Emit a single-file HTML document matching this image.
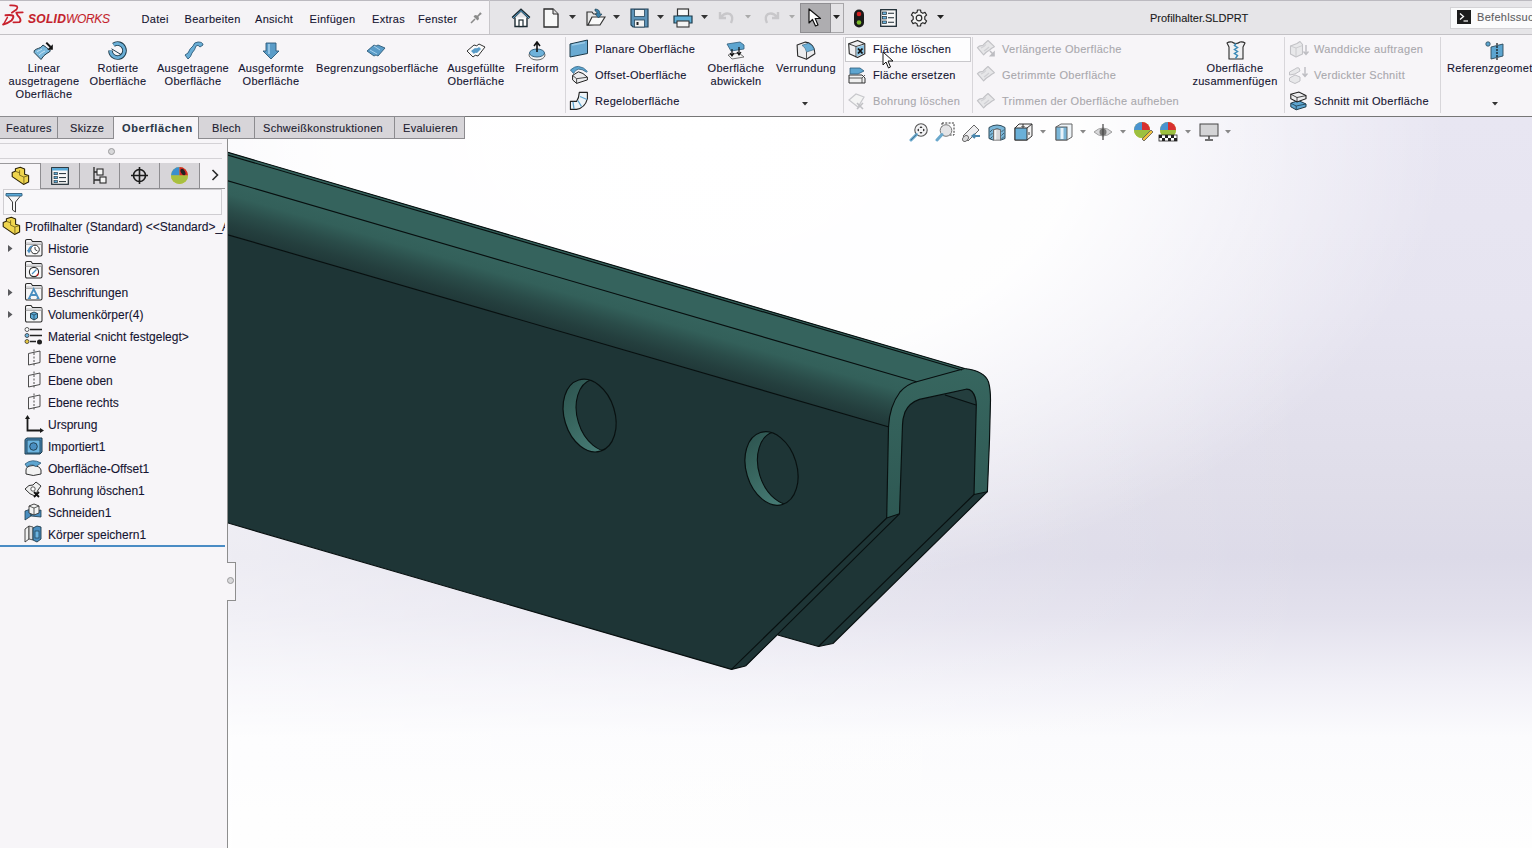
<!DOCTYPE html>
<html><head><meta charset="utf-8">
<style>
*{margin:0;padding:0;box-sizing:border-box}
html,body{width:1532px;height:848px;overflow:hidden;background:#f7f5f8;font-family:"Liberation Sans",sans-serif;color:#141430;font-size:11px;letter-spacing:0.3px;-webkit-text-stroke:0.1px currentColor}
.a{position:absolute}
.t{position:absolute;white-space:nowrap;line-height:13px}
.c{text-align:center}
.g{color:#a9a8ad}
</style></head><body>
<!-- title/menu bar -->
<div class="a" style="left:0;top:0;width:1532px;height:34px;background:#f5f3f6"></div>
<div class="a" style="left:489px;top:0;width:1043px;height:34px;background:#e6e5e8"></div>
<div class="a" style="left:0;top:0;width:1532px;height:1px;background:#bcbac0"></div>
<div class="a" style="left:489px;top:0;width:1px;height:34px;background:#c8c6ca"></div>
<div class="a" style="left:0;top:34px;width:1532px;height:1px;background:#c3c1c5"></div>
<!-- logo -->
<svg class="a" style="left:0;top:0" width="26" height="28" viewBox="0 0 26 28"><g fill="none" stroke="#c8202c" stroke-linecap="round" stroke-linejoin="round"><path d="M10.1 5.4 Q15 5.2 17 6.2 Q18 7.5 16.5 9.5 L11.8 12.7" stroke-width="1.7"/><path d="M5.5 15.3 Q11 14.6 13 15.6 Q14.2 17.5 11.5 20.5 Q8 23.2 3.1 24.5" stroke-width="1.9"/><path d="M7.4 17.3 L4 23.5" stroke-width="1.5"/><path d="M22.7 12.4 L16.3 12.7 Q17 15 19.5 17.5 Q21.5 20.5 19.6 22.2 L13.4 22.3" stroke-width="1.8"/></g></svg>
<div class="t" style="left:28px;top:13px;font-size:12px;color:#c41f2c;font-weight:bold;font-style:italic;line-height:13px">SOLID</div>
<div class="t" style="left:66px;top:13px;font-size:12px;color:#c41f2c;font-style:italic;letter-spacing:-0.35px;line-height:13px">WORKS</div>
<!-- menu -->
<div class="t" style="left:141.5px;top:13px;color:#141430">Datei</div>
<div class="t" style="left:184.5px;top:13px;color:#141430">Bearbeiten</div>
<div class="t" style="left:255px;top:13px;color:#141430">Ansicht</div>
<div class="t" style="left:309.5px;top:13px;color:#141430">Einfügen</div>
<div class="t" style="left:372px;top:13px;color:#141430">Extras</div>
<div class="t" style="left:418px;top:13px;color:#141430">Fenster</div>
<svg class="a" style="left:470px;top:10px" width="14" height="14" viewBox="0 0 14 14"><path d="M1 13 L5 9" stroke="#8a8a8a" stroke-width="1.6"/><path d="M3.5 6.5 L7.5 10.5 L9 9 L8.5 6.5 L11.5 4 L12.5 4.5 L9.5 1.5 L10 2.5 L7.5 5.5 L5 5 Z" fill="#8a8a8a"/></svg>
<!-- quick toolbar -->
<svg class="a" style="left:511px;top:8px" width="20" height="20" viewBox="0 0 20 20"><path d="M1.5 10 L10 2 L18.5 10" fill="none" stroke="#1d2b33" stroke-width="2.6"/><path d="M2 10 L10 2.7 L18 10" fill="none" stroke="#5aaad8" stroke-width="1"/><path d="M4 9.5 V18.5 H16 V9.5" fill="#fff" stroke="#1d2b33" stroke-width="1.4"/><rect x="8" y="12" width="4" height="6.5" fill="#fff" stroke="#1d2b33" stroke-width="1.2"/></svg>
<svg class="a" style="left:543px;top:8px" width="16" height="20" viewBox="0 0 16 20"><path d="M1 1 H10 L15 6 V19 H1 Z" fill="#f8f8f8" stroke="#2a2a2a" stroke-width="1.3"/><path d="M10 1 V6 H15" fill="#ddd" stroke="#2a2a2a" stroke-width="1"/></svg>
<svg class="a" style="left:569px;top:15px" width="7" height="5"><path d="M0 0 H7 L3.5 4 Z" fill="#333"/></svg>
<svg class="a" style="left:586px;top:8px" width="20" height="20" viewBox="0 0 20 20"><path d="M1 4 H6 L7.5 6 H13 V16 L1 17 Z" fill="#e8e8e8" stroke="#333" stroke-width="1.2"/><path d="M2 17 L6 9 H19 L14 17 Z" fill="#fafafa" stroke="#333" stroke-width="1.2"/><path d="M9 1 Q14 1 14 6 L16 6 L12.5 10 L9 6 L11 6 Q11 3 9 3 Z" fill="#3a7fa8" stroke="#1d3a4a" stroke-width="0.6"/></svg>
<svg class="a" style="left:613px;top:15px" width="7" height="5"><path d="M0 0 H7 L3.5 4 Z" fill="#333"/></svg>
<svg class="a" style="left:630px;top:8px" width="19" height="20" viewBox="0 0 19 20"><path d="M1 1 H18 V19 H3 L1 17 Z" fill="#5d93b8" stroke="#25455a" stroke-width="1.2"/><rect x="4.5" y="1.5" width="10" height="7" fill="#f2f2f2" stroke="#25455a" stroke-width="0.8"/><rect x="4.5" y="12" width="10" height="7" fill="#f2f2f2" stroke="#25455a" stroke-width="0.8"/><rect x="6.5" y="14" width="2" height="3" fill="#222"/></svg>
<svg class="a" style="left:657px;top:15px" width="7" height="5"><path d="M0 0 H7 L3.5 4 Z" fill="#333"/></svg>
<svg class="a" style="left:673px;top:8px" width="20" height="20" viewBox="0 0 20 20"><rect x="4.5" y="1" width="11" height="7" fill="#fafafa" stroke="#333" stroke-width="1.2"/><path d="M1 8 H19 V15 H1 Z" fill="#5fb0d8" stroke="#1d3a4a" stroke-width="1.2"/><rect x="4" y="13" width="12" height="6" fill="#f4f4f4" stroke="#333" stroke-width="1.1"/></svg>
<svg class="a" style="left:701px;top:15px" width="7" height="5"><path d="M0 0 H7 L3.5 4 Z" fill="#333"/></svg>
<svg class="a" style="left:718px;top:10px" width="18" height="15" viewBox="0 0 18 15"><path d="M2 2 V8 H8 M3 7 Q7 2 12 4 Q16 7 13 13" fill="none" stroke="#c8c7ca" stroke-width="2.4"/></svg>
<svg class="a" style="left:745px;top:15px" width="6" height="4"><path d="M0 0 H6 L3 3.5 Z" fill="#aaa"/></svg>
<svg class="a" style="left:762px;top:10px" width="18" height="15" viewBox="0 0 18 15"><path d="M16 2 V8 H10 M15 7 Q11 2 6 4 Q2 7 5 13" fill="none" stroke="#c8c7ca" stroke-width="2.4"/></svg>
<svg class="a" style="left:789px;top:15px" width="6" height="4"><path d="M0 0 H6 L3 3.5 Z" fill="#aaa"/></svg>
<div class="a" style="left:800px;top:3px;width:44px;height:30px;background:#e4e3e6;border:1px solid #a8a7aa"></div>
<div class="a" style="left:800px;top:3px;width:31px;height:30px;background:#aeadb0;border:1px solid #8f8e92"></div>
<svg class="a" style="left:808px;top:8px" width="14" height="19" viewBox="0 0 14 19"><path d="M1 1 V15 L4.5 11.5 L7.5 18 L10 17 L7.2 10.5 L12.5 10.5 Z" fill="#fff" stroke="#111" stroke-width="1.2" stroke-linejoin="round"/></svg>
<svg class="a" style="left:833px;top:15px" width="7" height="5"><path d="M0 0 H7 L3.5 4 Z" fill="#222"/></svg>
<svg class="a" style="left:853px;top:9px" width="12" height="19" viewBox="0 0 12 19"><rect x="1" y="0.5" width="10" height="18" rx="5" fill="#1a1a1a"/><circle cx="6" cy="5" r="2.3" fill="#d42020"/><circle cx="6" cy="13.5" r="2.3" fill="#7ab82a"/></svg>
<svg class="a" style="left:880px;top:9px" width="17" height="18" viewBox="0 0 17 18"><rect x="0.7" y="0.7" width="15.6" height="16.6" fill="#f8f8f8" stroke="#1d2b33" stroke-width="1.3"/><rect x="2.5" y="3" width="4" height="2.5" fill="#6cb4e0" stroke="#1d2b33" stroke-width="0.7"/><rect x="2.5" y="7.5" width="4" height="2.5" fill="#6cb4e0" stroke="#1d2b33" stroke-width="0.7"/><rect x="2.5" y="12" width="4" height="2.5" fill="#6cb4e0" stroke="#1d2b33" stroke-width="0.7"/><path d="M8 4.2H14M8 8.7H14M8 13.2H14" stroke="#1d2b33" stroke-width="1.1"/></svg>
<svg class="a" style="left:910px;top:9px" width="18" height="18" viewBox="0 0 18 18"><path d="M7.5 1 H10.5 L11 3.3 L12.8 4.3 L15 3.4 L16.6 6 L14.8 7.6 V10.4 L16.6 12 L15 14.6 L12.8 13.7 L11 14.7 L10.5 17 H7.5 L7 14.7 L5.2 13.7 L3 14.6 L1.4 12 L3.2 10.4 V7.6 L1.4 6 L3 3.4 L5.2 4.3 L7 3.3 Z" fill="#f4f4f4" stroke="#2a2a2a" stroke-width="1.2" stroke-linejoin="round"/><circle cx="9" cy="9" r="2.8" fill="none" stroke="#2a2a2a" stroke-width="1.2"/></svg>
<svg class="a" style="left:937px;top:15px" width="7" height="5"><path d="M0 0 H7 L3.5 4 Z" fill="#222"/></svg>
<div class="t" style="left:1150px;top:12px;color:#1a1a1a;letter-spacing:0">Profilhalter.SLDPRT</div>
<div class="a" style="left:1450px;top:7px;width:90px;height:22px;background:#fbfbfc;border:1px solid #d4d3d6"></div>
<div class="a" style="left:1457px;top:10px;width:14px;height:14px;background:#1c1c1c"></div>
<svg class="a" style="left:1457px;top:10px" width="14" height="14"><path d="M3 3.5 L6.5 6.5 L3 9.5" fill="none" stroke="#fff" stroke-width="1.3"/><path d="M6.5 11 H11" stroke="#fff" stroke-width="1.2"/></svg>
<div class="t" style="left:1477px;top:11px;color:#5e5e62">Befehlssuche</div>

<!-- ribbon -->
<div class="a" style="left:0;top:35px;width:1532px;height:81px;background:#f7f5f8"></div>
<div class="a" style="left:0;top:116px;width:1532px;height:1px;background:#767676"></div>
<!-- ribbon large buttons -->
<svg class="a" style="left:33px;top:41px" width="22" height="20" viewBox="0 0 22 20"><path d="M1.2 9.7 Q3 8 5.4 7.4 Q8 7 10 4 L13.5 6.5 L17.5 9.8 Q16 11.5 14 12.3 Q11 13.8 8 18.5 L1.2 11.6 Z" fill="#7ab8dc" stroke="#1d3a4a" stroke-width="1"/><path d="M4 10.5 Q7 9.5 9 8 M6 14 Q9 11 12 10" stroke="#c8e4f4" stroke-width="1" fill="none"/><path d="M13.3 1.6 L17.5 6" stroke="#111" stroke-width="2"/><path d="M19.8 3.2 V8.7 H14.3 Z" fill="#111"/></svg>
<svg class="a" style="left:108px;top:41px" width="20" height="20" viewBox="0 0 20 20"><path d="M2.5 9.5 A7 7 0 1 0 5.5 3.8" fill="none" stroke="#1d3a4a" stroke-width="4.6"/><path d="M2.5 9.5 A7 7 0 1 0 5.5 3.8" fill="none" stroke="#6aaed6" stroke-width="2.8"/><path d="M3.5 7.8 L13 13.5" stroke="#1d3a4a" stroke-width="1"/></svg>
<svg class="a" style="left:183px;top:40px" width="22" height="20" viewBox="0 0 22 20"><path d="M2 15 L5 13 Q7 8 10 6 Q11 2 15 2 Q20 2 20 5 L17 7 Q15 4 13 6 Q12 10 9 13 Q8 17 5 19 Z" fill="#6aaed6" stroke="#2d5a78" stroke-width="0.9"/></svg>
<svg class="a" style="left:262px;top:42px" width="18" height="18" viewBox="0 0 18 18"><path d="M4 1 H14 V9 H17 L9 17 L1 9 H4 Z" fill="#5a9cc8" stroke="#2d5a78" stroke-width="0.9"/><path d="M7 2 V12" stroke="#a8d2ee" stroke-width="1.5"/></svg>
<svg class="a" style="left:366px;top:42px" width="20" height="17" viewBox="0 0 20 17"><path d="M1 9 L8 3 Q10 5 12 3 L19 6 L12 14 Q10 12 8 14 Z" fill="#5a9cc8" stroke="#2d5a78" stroke-width="0.9"/><path d="M4 8 L11 12 M8 4 L14 8" stroke="#a8d2ee" stroke-width="1"/></svg>
<svg class="a" style="left:466px;top:42px" width="20" height="17" viewBox="0 0 20 17"><path d="M1 9 L8 3 Q11 5 13 2 L19 5 L12 14 Q9 12 7 15 Z" fill="#fafafa" stroke="#333" stroke-width="1"/><path d="M5 9 L9 6 Q11 7 13 5 L15 7 L11 11 Q9 10 8 12 Z" fill="#5a9cc8"/></svg>
<svg class="a" style="left:528px;top:41px" width="18" height="20" viewBox="0 0 18 20"><ellipse cx="9" cy="14" rx="8" ry="5" fill="#f4f4f4" stroke="#555" stroke-width="0.9"/><ellipse cx="9" cy="12" rx="7.5" ry="4" fill="#6fb2da" stroke="#2d5a78" stroke-width="0.9"/><path d="M9 11 V2 M6 5 L9 1 L12 5" stroke="#111" stroke-width="1.6" fill="none"/></svg>
<div class="t c" style="left:4px;top:61.5px;width:80px">Linear<br>ausgetragene<br>Oberfläche</div>
<div class="t c" style="left:78px;top:61.5px;width:80px">Rotierte<br>Oberfläche</div>
<div class="t c" style="left:153px;top:61.5px;width:80px">Ausgetragene<br>Oberfläche</div>
<div class="t c" style="left:231px;top:61.5px;width:80px">Ausgeformte<br>Oberfläche</div>
<div class="t c" style="left:316px;top:61.5px;width:120px">Begrenzungsoberfläche</div>
<div class="t c" style="left:436px;top:61.5px;width:80px">Ausgefüllte<br>Oberfläche</div>
<div class="t c" style="left:507px;top:61.5px;width:60px">Freiform</div>
<div class="a" style="left:565px;top:37px;width:1px;height:76px;background:#d8d6da"></div>
<!-- small buttons group 1 -->
<svg class="a" style="left:569px;top:39px" width="20" height="19" viewBox="0 0 20 19"><path d="M1 5 L18.5 1 V14.5 L1 18 Z" fill="#6aaad2" stroke="#1d3a4a" stroke-width="1"/><path d="M3 6 L16 3.5" stroke="#9ccbe8" stroke-width="1.5"/></svg>
<div class="t" style="left:595px;top:42.5px">Planare Oberfläche</div>
<svg class="a" style="left:569px;top:64px" width="20" height="22" viewBox="0 0 20 22"><path d="M3.6 11.4 L9.4 7.8 Q14 8.5 18.4 13.2 V15.9 L7.6 19.4 L3.6 15.9 Z" fill="#ececee" stroke="#222" stroke-width="1"/><path d="M3.6 11.4 L7.6 14.7 L18.4 13.2 M7.6 14.7 V19.4" fill="none" stroke="#222" stroke-width="0.8"/><path d="M1.4 6 Q6 2 9.4 2.4 Q15 3 18.4 7.5 L17.5 8.2 Q13 4.8 9.4 5.2 Q6.5 5.6 4.5 9.5 Z" fill="#5da5d0" stroke="#2d5a78" stroke-width="0.7"/></svg>
<div class="t" style="left:595px;top:68.5px">Offset-Oberfläche</div>
<svg class="a" style="left:569px;top:91px" width="20" height="20" viewBox="0 0 20 20"><path d="M1.4 10.4 H7.6 Q10 7 10.3 1.4 H18.4 V7.7 Q16 17 7.6 18.4 H1.4 Z" fill="#eef4f8" stroke="#222" stroke-width="1.1" stroke-linejoin="round"/><path d="M4 10.8 L5 18 M8.8 9.5 L12.5 15.5 M11 5.5 L18 8.5" stroke="#5da5d0" stroke-width="1.3"/></svg>
<div class="t" style="left:595px;top:95px">Regeloberfläche</div>
<svg class="a" style="left:726px;top:41px" width="19" height="19" viewBox="0 0 19 19"><path d="M2 14 L13 12 L18 16 L6 18 Z" fill="#f6f6f6" stroke="#555" stroke-width="0.8"/><path d="M1 3 L14 1 L18 4 V8 L5 10 Z" fill="#5da5d0" stroke="#2d5a78" stroke-width="0.8"/><path d="M6 8 V14 M4 12 L6 15 L8 12 M13 6 V13 M11 11 L13 14 L15 11" stroke="#111" stroke-width="1.2" fill="none"/></svg>
<div class="t c" style="left:696px;top:61.5px;width:80px">Oberfläche<br>abwickeln</div>
<svg class="a" style="left:796px;top:41px" width="20" height="20" viewBox="0 0 20 20"><path d="M1.1 3.9 L9.4 1.1 Q13 1.5 15 3.5 Q18.3 5.5 18.9 12.8 L10.5 18.3 L1.7 15 Z" fill="#ececee" stroke="#2a2a2a" stroke-width="1.1" stroke-linejoin="round"/><path d="M6 4.3 L12.5 2.2 Q16.5 3.5 18.3 8.5 L10.5 11 Q9.8 6.5 6 4.3 Z" fill="#6aaed6" stroke="#2d5a78" stroke-width="0.6"/><path d="M10.5 11 V18.3" stroke="#444" stroke-width="0.9"/></svg>
<div class="t c" style="left:766px;top:61.5px;width:80px">Verrundung</div>
<svg class="a" style="left:802px;top:102px" width="6" height="4"><path d="M0 0 H6 L3 3.5 Z" fill="#333"/></svg>
<div class="a" style="left:843px;top:37px;width:1px;height:76px;background:#d8d6da"></div>
<!-- group 2 -->
<div class="a" style="left:845px;top:37px;width:126px;height:25px;background:#fdfdfe;border:1px solid #c9c8cc"></div>
<svg class="a" style="left:848px;top:39px" width="18" height="20" viewBox="0 0 18 20"><path d="M0.7 4.8 L9.6 1.4 L16.8 4.8 V14.8 L9.6 18.6 L1.3 14.8 Z" fill="#efeff1" stroke="#2a2a2a" stroke-width="1.1" stroke-linejoin="round"/><path d="M0.7 4.8 L8 7.5 L16.8 4.8 M8 7.5 V18.3" fill="none" stroke="#2a2a2a" stroke-width="0.9"/><path d="M8.6 8.3 L16 6 V14.3 L8.6 17.5 Z" fill="#8cc4e4"/><path d="M10 9.5 L14.5 14.5 M14.5 9.5 L10 14.5" stroke="#111" stroke-width="1.8"/></svg>
<div class="t" style="left:873px;top:42.5px">Fläche löschen</div>
<svg class="a" style="left:882px;top:51px" width="13" height="18" viewBox="0 0 13 18"><path d="M1 1 V14 L4 11 L6.5 17 L8.5 16 L6 10 L11 10 Z" fill="#fff" stroke="#111" stroke-width="1" stroke-linejoin="round"/></svg>
<svg class="a" style="left:848px;top:66px" width="18" height="18" viewBox="0 0 18 18"><path d="M1 9 H14 L17 12 V17 H1 Z" fill="#f0f0f0" stroke="#333" stroke-width="1"/><path d="M1 12 H14 V17 M14 12 L17 9" stroke="#333" stroke-width="0.8" fill="none"/><path d="M2 2 H12 L16 5 L10 8 H2 Z" fill="#5da5d0" stroke="#2d5a78" stroke-width="0.8"/></svg>
<div class="t" style="left:873px;top:68.5px">Fläche ersetzen</div>
<svg class="a" style="left:848px;top:92px" width="18" height="18" viewBox="0 0 18 18"><path d="M1 8 L8 2 L16 5 L10 15 Z" fill="#f4f4f4" stroke="#c8c8cc" stroke-width="1.2"/><path d="M9 11 L15 17 M15 11 L9 17" stroke="#c0c0c4" stroke-width="1.6"/></svg>
<div class="t g" style="left:873px;top:95px">Bohrung löschen</div>
<div class="a" style="left:972px;top:37px;width:1px;height:76px;background:#d8d6da"></div>
<!-- group 3 -->
<svg class="a" style="left:976px;top:39px" width="20" height="19" viewBox="0 0 20 19"><path d="M1.4 8.6 Q4 6 6.5 6.8 Q9 4 12 1.5 L18.4 7.7 Q15.5 9 13.5 11 Q10.5 12.5 7.6 15.8 Z" fill="#e6e6e8" stroke="#c2c2c6" stroke-width="1.1" stroke-linejoin="round"/><path d="M5 9 Q8 8 10 5.5 M8 12 Q11 10 13 8" stroke="#d0d0d4" stroke-width="1.2" fill="none"/><path d="M14 12 L17 15" stroke="#bdbdc2" stroke-width="1.5"/><path d="M18.8 11.5 V17.6 H12.8 Z" fill="#bdbdc2"/></svg>
<div class="t g" style="left:1002px;top:42.5px">Verlängerte Oberfläche</div>
<svg class="a" style="left:976px;top:65px" width="20" height="19" viewBox="0 0 20 19"><path d="M1.4 8.6 Q4 6 6.5 6.8 Q9 4 12 1.5 L18.4 7.7 Q15.5 9 13.5 11 Q10.5 12.5 7.6 15.8 Z" fill="#e6e6e8" stroke="#c2c2c6" stroke-width="1.1" stroke-linejoin="round"/><path d="M5 9 Q8 8 10 5.5 M8 12 Q11 10 13 8" stroke="#d0d0d4" stroke-width="1.2" fill="none"/></svg>
<div class="t g" style="left:1002px;top:68.5px">Getrimmte Oberfläche</div>
<svg class="a" style="left:976px;top:92px" width="20" height="19" viewBox="0 0 20 19"><path d="M1.4 8.6 Q4 6 6.5 6.8 Q9 4 12 1.5 L18.4 7.7 Q15.5 9 13.5 11 Q10.5 12.5 7.6 15.8 Z" fill="#e6e6e8" stroke="#c2c2c6" stroke-width="1.1" stroke-linejoin="round"/><path d="M5 9 Q8 8 10 5.5 M8 12 Q11 10 13 8" stroke="#d0d0d4" stroke-width="1.2" fill="none"/></svg>
<div class="t g" style="left:1002px;top:95px">Trimmen der Oberfläche aufheben</div>
<svg class="a" style="left:1226px;top:41px" width="20" height="19" viewBox="0 0 20 19"><path d="M1 2 Q3 0.5 6 1 Q10 4 14 1 Q17 0.5 19 2 L17 6 V18 H3 V6 Z" fill="#f0f0f2" stroke="#2a2a2a" stroke-width="1.1" stroke-linejoin="round"/><path d="M10 2.5 L8.5 4.5 L11.5 6.5 L8.5 8.5 L11.5 10.5 L8.5 12.5 L11.5 14.5 L9.5 17.5" stroke="#3a8ab8" stroke-width="1.5" fill="none"/></svg>
<div class="t c" style="left:1185px;top:61.5px;width:100px">Oberfläche<br>zusammenfügen</div>
<div class="a" style="left:1284px;top:37px;width:1px;height:76px;background:#d8d6da"></div>
<!-- group 4 -->
<svg class="a" style="left:1289px;top:40px" width="20" height="19" viewBox="0 0 20 19"><path d="M1.5 6 L8 3.5 L11 1.5 L13.5 4.5 V14 L7 17 L1.5 14 Z" fill="#e8e8ea" stroke="#c2c2c6" stroke-width="1.1" stroke-linejoin="round"/><path d="M1.5 6 L7 8 L13.5 5.5 M7 8 V17" stroke="#c8c8cc" stroke-width="0.9" fill="none"/><path d="M17 5 V14 M14.5 11.5 L17 14.5 L19.5 11.5" stroke="#bdbdc2" stroke-width="1.4" fill="none"/></svg>
<div class="t g" style="left:1314px;top:42.5px">Wanddicke auftragen</div>
<svg class="a" style="left:1288px;top:65px" width="20" height="20" viewBox="0 0 20 20"><path d="M1.5 13 L7 10 L12 12 V16 L7 18.5 L1.5 16 Z" fill="#e8e8ea" stroke="#c2c2c6" stroke-width="1"/><path d="M1.5 7 L7 4 Q9 2 11 3 L12 6 L7 9 L1.5 10 Z" fill="#e8e8ea" stroke="#c2c2c6" stroke-width="1"/><path d="M17 2 V11 M14.5 8.5 L17 11.5 L19.5 8.5" stroke="#bdbdc2" stroke-width="1.4" fill="none"/></svg>
<div class="t g" style="left:1314px;top:68.5px">Verdickter Schnitt</div>
<svg class="a" style="left:1289px;top:91px" width="19" height="20" viewBox="0 0 19 20"><path d="M1.8 12.2 L9.5 9.5 L17 13 V15.8 L7.2 18.8 L1.8 15.8 Z" fill="#5da5d0" stroke="#1d3a4a" stroke-width="1"/><path d="M1.8 12.2 L7.2 15 L17 13 M7.2 15 V18.8" stroke="#1d3a4a" stroke-width="0.8" fill="none"/><path d="M1.8 3.2 L9.9 1 L17 4.6 V7.7 L8 11 L1.8 7.7 Z" fill="#ececee" stroke="#1a1a1a" stroke-width="1.05"/><path d="M1.8 3.2 L8 6.5 L17 4.6 M8 6.5 V11" stroke="#1a1a1a" stroke-width="0.8" fill="none"/></svg>
<div class="t" style="left:1314px;top:95px">Schnitt mit Oberfläche</div>
<div class="a" style="left:1440px;top:37px;width:1px;height:76px;background:#d8d6da"></div>
<svg class="a" style="left:1485px;top:41px" width="20" height="19" viewBox="0 0 20 19"><circle cx="3" cy="3" r="2.2" fill="#5da5d0" stroke="#2d4a5a" stroke-width="0.8"/><path d="M6 6 L18 3 V15 L6 18 Z" fill="#5da5d0" stroke="#2d4a5a" stroke-width="0.9"/><path d="M12 2 V19" stroke="#111" stroke-width="1.2" stroke-dasharray="2 1"/></svg>
<div class="t" style="left:1447px;top:61.5px">Referenzgeometrie</div>
<svg class="a" style="left:1492px;top:102px" width="6" height="4"><path d="M0 0 H6 L3 3.5 Z" fill="#333"/></svg>

<!-- viewport -->
<div class="a" id="vp" style="left:228px;top:117px;width:1304px;height:731px;background:radial-gradient(ellipse 740px 460px at 480px 20px, rgba(255,255,255,1) 0%, rgba(255,255,255,0.95) 50%, rgba(255,255,255,0) 100%),linear-gradient(90deg,rgba(255,255,255,0.5) 0px,rgba(255,255,255,0.15) 730px,rgba(255,255,255,0) 1100px),linear-gradient(180deg,#e8e6f2 0px,#e6e4f0 200px,#dfdde9 380px,#dcdae8 440px,#e3e1ed 500px,#f1f0f7 565px,#fbfbfd 620px,#fefefe 731px)"></div>
<svg class="a" style="left:0;top:0" width="1532" height="848" viewBox="0 0 1532 848">
<defs>
<clipPath id="vpc"><rect x="228" y="139" width="1304" height="709"/></clipPath>
<linearGradient id="fil" gradientUnits="userSpaceOnUse" x1="228" y1="180.6" x2="213.4" y2="230.5">
<stop offset="0" stop-color="#35635d"/><stop offset="0.25" stop-color="#33605a"/><stop offset="0.55" stop-color="#2a4c49"/><stop offset="0.8" stop-color="#243f3e"/><stop offset="1" stop-color="#203838"/>
</linearGradient>
<linearGradient id="band" gradientUnits="userSpaceOnUse" x1="0" y1="370" x2="0" y2="518"><stop offset="0" stop-color="#37665f"/><stop offset="1" stop-color="#2e5853"/></linearGradient>
<linearGradient id="cres" x1="0" y1="0" x2="0.3" y2="1"><stop offset="0" stop-color="#2c524e"/><stop offset="0.5" stop-color="#38665f"/><stop offset="1" stop-color="#467a74"/></linearGradient>
<clipPath id="h1"><ellipse cx="589.6" cy="415.6" rx="25.3" ry="37.2" transform="rotate(-17 589.6 415.6)"/></clipPath>
<clipPath id="h2"><ellipse cx="771.5" cy="468.5" rx="25.3" ry="37.6" transform="rotate(-17 771.5 468.5)"/></clipPath>
</defs>
<g clip-path="url(#vpc)">
<path d="M220 150 L964.7 368.5 C977 370 985.5 373.5 988.5 382 Q990.5 389 990.5 400 L989.5 440 L987.4 491.7 L832.9 643.5 L818.5 646.5 L777.7 635 L745.5 666 L731.5 669.4 L220 520.7 Z" fill="#1e3536"/>
<path d="M220 150 L964.7 368.5 L916.6 381.7 L220 178.5 Z" fill="#35635d"/>
<path d="M220 178.5 L916.6 381.7 Q900 388 893 405 Q889 415 889 427 L220 232.5 Z" fill="url(#fil)"/>
<path d="M886.7 518 L888.5 427 Q889.5 406 900 392 Q907 384 916.6 381.7 L964.7 368.5 C977 370 985.5 373.5 988.5 382 Q990.5 389 990.5 400 L989.5 440 L987.4 491.7 L974 494.5 L976.3 405 Q976 396 972 391.5 Q969.5 389 966 389.2 L919.4 399.4 Q909 403 905 412 Q902.5 419 902.5 425 L899.5 513.8 Z" fill="url(#band)"/>
<path d="M945 394.5 L966 389.2 Q969.5 389 972 391.5 Q976 396 976.3 405 Z" fill="#243e3e"/>
<ellipse cx="589.6" cy="415.6" rx="25.3" ry="37.2" transform="rotate(-17 589.6 415.6)" fill="url(#cres)"/>
<g clip-path="url(#h1)"><ellipse cx="602.6" cy="415" rx="25.3" ry="37.2" transform="rotate(-17 602.6 415)" fill="#1e3536" stroke="#081010" stroke-width="1.1"/></g>
<ellipse cx="589.6" cy="415.6" rx="25.3" ry="37.2" transform="rotate(-17 589.6 415.6)" fill="none" stroke="#081010" stroke-width="1.2"/>
<ellipse cx="771.5" cy="468.5" rx="25.3" ry="37.6" transform="rotate(-17 771.5 468.5)" fill="url(#cres)"/>
<g clip-path="url(#h2)"><ellipse cx="784" cy="468" rx="25.3" ry="37.6" transform="rotate(-17 784 468)" fill="#1e3536" stroke="#081010" stroke-width="1.1"/></g>
<ellipse cx="771.5" cy="468.5" rx="25.3" ry="37.6" transform="rotate(-17 771.5 468.5)" fill="none" stroke="#081010" stroke-width="1.2"/>
<g fill="none" stroke="#081010" stroke-width="1.15" stroke-linejoin="round">
<path d="M220 150 L964.7 368.5 C977 370 985.5 373.5 988.5 382 Q990.5 389 990.5 400 L989.5 440 L987.4 491.7 L832.9 643.5 L818.5 646.5 L777.7 635 M745.5 666 L731.5 669.4 L220 520.7"/>
<path d="M220 152.8 L962 370"/>
<path d="M220 178.5 L916.6 381.7 L964.7 368.5"/>
<path d="M220 232.5 L889 427"/>
<path d="M886.7 518 L888.5 427 Q889.5 406 900 392 Q907 384 916.6 381.7"/>
<path d="M987.4 491.7 L974 494.5 L976.3 405 Q976 396 972 391.5 Q969.5 389 966 389.2 L919.4 399.4 Q909 403 905 412 Q902.5 419 902.5 425 L899.5 513.8 L886.7 518"/>
<path d="M945 395 L976 405"/>
<path d="M731.5 669.4 L886.7 518 M745.5 666 L899.5 513.8"/>
<path d="M818.5 646.5 L974 494.5"/>
</g>
</g>
</svg>

<!-- heads-up toolbar -->
<svg class="a" style="left:909px;top:122px" width="20" height="20" viewBox="0 0 20 20"><circle cx="12" cy="8" r="6.2" fill="#f2f2f4" stroke="#555" stroke-width="1.1"/><path d="M12 4 L13.5 6 H10.5 Z M12 12 L13.5 10 H10.5 Z M8 8 L10 6.5 V9.5 Z M16 8 L14 6.5 V9.5 Z" fill="#333"/><path d="M7.5 12.5 L2 18" stroke="#6aa8cc" stroke-width="3" stroke-linecap="round"/><path d="M7.5 12.5 L2 18" stroke="#3d6a88" stroke-width="0.8"/></svg>
<svg class="a" style="left:935px;top:122px" width="20" height="20" viewBox="0 0 20 20"><rect x="7" y="1" width="12" height="12" fill="none" stroke="#333" stroke-width="1" stroke-dasharray="2 1.3"/><circle cx="11" cy="8.5" r="5.8" fill="#e4e4e6" stroke="#777" stroke-width="1"/><path d="M7 12.5 L2 18" stroke="#6aa8cc" stroke-width="3" stroke-linecap="round"/></svg>
<svg class="a" style="left:961px;top:122px" width="20" height="20" viewBox="0 0 20 20"><path d="M2 14 L13 3 L18 8 L7 19 Z" fill="#ededef" stroke="#666" stroke-width="1"/><ellipse cx="4.5" cy="16.5" rx="2.5" ry="3.5" transform="rotate(45 4.5 16.5)" fill="#d8d8da" stroke="#666" stroke-width="0.9"/><path d="M19 14 H12 M14 12 L11.5 14 L14 16" stroke="#4a86ac" stroke-width="2" fill="none"/></svg>
<svg class="a" style="left:988px;top:123px" width="18" height="18" viewBox="0 0 18 18"><path d="M1 4.5 Q9 -0.5 17 4.5 V15.5 L12.5 17.2 V6.8 Q9 5 5.5 6.8 V17.2 L1 15.5 Z" fill="#7ab6d8" stroke="#2d4a5a" stroke-width="1"/><path d="M2 9 L4.5 6.5 M2 12.5 L4.5 10 M2 16 L4.5 13.5 M13.5 9 L16 6.5 M13.5 12.5 L16 10 M13.5 16 L16 13.5" stroke="#2d4a5a" stroke-width="0.8"/><path d="M5.5 6.8 Q9 5 12.5 6.8 V17.2 H5.5 Z" fill="#d6d6d8" stroke="#666" stroke-width="0.8"/><path d="M7.5 7 V16.5" stroke="#f4f4f4" stroke-width="1.5"/></svg>
<svg class="a" style="left:1014px;top:123px" width="19" height="18" viewBox="0 0 19 18"><path d="M1 5 L5 1 H18 V13 L13 17 H1 Z" fill="#f4f4f4" stroke="#333" stroke-width="1"/><rect x="1" y="5" width="12" height="12" fill="#6ab0d8" stroke="#333" stroke-width="1"/><path d="M13 5 L18 1" stroke="#333" stroke-width="1"/><path d="M9 1 V4 M7.5 3 L9 4.5 L10.5 3 M15 9 V12" stroke="#222" stroke-width="0.9" fill="none"/></svg>
<svg class="a" style="left:1040px;top:130px" width="6" height="4"><path d="M0 0 H6 L3 3.5 Z" fill="#888"/></svg>
<svg class="a" style="left:1055px;top:123px" width="18" height="18" viewBox="0 0 18 18"><path d="M1 4 L6 1 H17 V14 L12 17 H1 Z" fill="#eef4f8" stroke="#666" stroke-width="1"/><rect x="1" y="4" width="11" height="13" fill="#7ab6d8" stroke="#555" stroke-width="0.9"/><path d="M7 5 V16" stroke="#e6f2fa" stroke-width="3"/></svg>
<svg class="a" style="left:1080px;top:130px" width="6" height="4"><path d="M0 0 H6 L3 3.5 Z" fill="#888"/></svg>
<svg class="a" style="left:1093px;top:123px" width="20" height="18" viewBox="0 0 20 18"><path d="M1 9 Q10 1 19 9 Q10 17 1 9 Z" fill="#d8d8da" stroke="#999" stroke-width="0.9"/><circle cx="10" cy="9" r="3.5" fill="#777"/><path d="M10 1 V17" stroke="#444" stroke-width="1.2"/></svg>
<svg class="a" style="left:1120px;top:130px" width="6" height="4"><path d="M0 0 H6 L3 3.5 Z" fill="#888"/></svg>
<svg class="a" style="left:1133px;top:121px" width="20" height="20" viewBox="0 0 20 20"><circle cx="9" cy="9" r="8" fill="#cfc23a"/><path d="M1 9 A8 8 0 0 1 9 1 V9 Z" fill="#4a94d0"/><path d="M9 1 A8 8 0 0 1 17 9 H9 Z" fill="#d83030"/><path d="M1 9 H17 A8 8 0 0 1 1 9" fill="#9cc040"/><path d="M9 18 L18 9 L20 11 L11 20 Z" fill="#f0c040" stroke="#555" stroke-width="0.8"/></svg>
<svg class="a" style="left:1158px;top:121px" width="20" height="21" viewBox="0 0 20 21"><circle cx="10" cy="9" r="8" fill="#cfc23a"/><path d="M2 9 A8 8 0 0 1 10 1 V9 Z" fill="#4a94d0"/><path d="M10 1 A8 8 0 0 1 18 9 H10 Z" fill="#d83030"/><path d="M2 9 H18 A8 8 0 0 1 2 9" fill="#9cc040"/><rect x="1" y="14" width="18" height="6" fill="#fff" stroke="#222" stroke-width="0.8"/><path d="M1 14 h3 v3 h-3z M7 14 h3 v3 h-3z M13 14 h3 v3 h-3z M4 17 h3 v3 h-3z M10 17 h3 v3 h-3z M16 17 h3 v3 h-3z" fill="#222"/></svg>
<svg class="a" style="left:1185px;top:130px" width="6" height="4"><path d="M0 0 H6 L3 3.5 Z" fill="#888"/></svg>
<svg class="a" style="left:1199px;top:123px" width="20" height="18" viewBox="0 0 20 18"><rect x="1" y="1" width="18" height="12" fill="#d4d4d6" stroke="#444" stroke-width="1"/><path d="M10 13 V16 M6 17 H14" stroke="#444" stroke-width="1.5"/></svg>
<svg class="a" style="left:1225px;top:130px" width="6" height="4"><path d="M0 0 H6 L3 3.5 Z" fill="#888"/></svg>
<!-- tabs -->
<div class="a" style="left:0;top:117px;width:228px;height:22px;background:#f7f5f8"></div>
<div class="a" style="left:0;top:116px;width:58px;height:23px;background:#d7d5d9;border:1px solid #8c8b8f;border-left:none"></div>
<div class="a" style="left:57px;top:116px;width:57px;height:23px;background:#d7d5d9;border:1px solid #8c8b8f"></div>
<div class="a" style="left:198px;top:116px;width:57px;height:23px;background:#d7d5d9;border:1px solid #8c8b8f"></div>
<div class="a" style="left:254px;top:116px;width:141px;height:23px;background:#d7d5d9;border:1px solid #8c8b8f"></div>
<div class="a" style="left:394px;top:116px;width:71px;height:23px;background:#d7d5d9;border:1px solid #8c8b8f"></div>
<div class="t" style="left:6px;top:121.5px;color:#20202e">Features</div>
<div class="t" style="left:70px;top:121.5px;color:#20202e">Skizze</div>
<div class="t" style="left:122px;top:121.5px;color:#2a3848;font-weight:bold;letter-spacing:0.6px">Oberflächen</div>
<div class="t" style="left:212px;top:121.5px;color:#20202e">Blech</div>
<div class="t" style="left:263px;top:121.5px;color:#20202e">Schweißkonstruktionen</div>
<div class="t" style="left:403px;top:121.5px;color:#20202e">Evaluieren</div>

<!-- left panel -->
<div class="a" style="left:0;top:139px;width:227px;height:709px;background:#f7f5f8"></div>
<div class="a" style="left:227px;top:139px;width:1px;height:709px;background:#8e8e8e"></div>
<div class="a" style="left:0;top:143px;width:222px;height:1px;background:#d4d2d6"></div>
<div class="a" style="left:107.5px;top:147.5px;width:7px;height:7px;border-radius:50%;background:#d8d8da;border:1px solid #9a9a9c"></div>
<div class="a" style="left:0;top:158px;width:222px;height:1px;background:#d4d2d6"></div>
<div class="a" style="left:0;top:163px;width:200px;height:1px;background:#9a999c"></div>
<div class="a" style="left:200px;top:188px;width:25px;height:1px;background:#9a999c"></div>
<div class="a" style="left:40px;top:163px;width:160px;height:26px;background:#d7d5d9;border:1px solid #8e8d91;border-top:none"></div>
<div class="a" style="left:79px;top:163px;width:1px;height:25px;background:#8e8d91"></div>
<div class="a" style="left:119px;top:163px;width:1px;height:25px;background:#8e8d91"></div>
<div class="a" style="left:159px;top:163px;width:1px;height:25px;background:#8e8d91"></div>
<!-- panel tab icons -->
<svg class="a" style="left:9px;top:164px" width="24" height="24" viewBox="0 0 24 24"><path d="M3.2 8.4 L6.4 7.3 V4.8 L11.3 3.3 L15.6 5 V10.2 L19.6 11.6 V18 L14.5 20.4 L3.2 12.6 Z" fill="#efd54e" stroke="#2a2208" stroke-width="1.1" stroke-linejoin="round"/><path d="M10.6 6.3 V11.2 L14.9 13 V20.2 M14.9 13 L19.5 11.6 M6.4 7.3 L10.6 8.8" fill="none" stroke="#6a5a18" stroke-width="0.8"/></svg>
<svg class="a" style="left:51px;top:167px" width="18" height="18" viewBox="0 0 18 18"><rect x="0.7" y="0.7" width="16.6" height="16.6" fill="#f8f8f8" stroke="#1d2b33" stroke-width="1.2"/><rect x="1" y="1" width="16" height="2.5" fill="#5aaad8"/><rect x="3" y="5.5" width="3.5" height="2.2" fill="#5aaad8" stroke="#1d2b33" stroke-width="0.6"/><rect x="3" y="9.5" width="3.5" height="2.2" fill="#5aaad8" stroke="#1d2b33" stroke-width="0.6"/><rect x="3" y="13.5" width="3.5" height="2.2" fill="#5aaad8" stroke="#1d2b33" stroke-width="0.6"/><path d="M8 6.6H15M8 10.6H15M8 14.6H15" stroke="#1d2b33" stroke-width="1"/></svg>
<svg class="a" style="left:92px;top:166px" width="16" height="19" viewBox="0 0 16 19"><path d="M2 1 V18 M2 6 H6 M2 14 H8" stroke="#2a2a2a" stroke-width="1.3" fill="none"/><rect x="5" y="3" width="6" height="6" fill="#f4f4f4" stroke="#2a2a2a" stroke-width="1.1"/><rect x="8" y="11" width="6" height="6" fill="#f4f4f4" stroke="#2a2a2a" stroke-width="1.1"/></svg>
<svg class="a" style="left:130px;top:166px" width="19" height="19" viewBox="0 0 19 19"><circle cx="9.5" cy="9.5" r="6" fill="none" stroke="#1a1a1a" stroke-width="1.6"/><path d="M9.5 1 V18 M1 9.5 H18" stroke="#1a1a1a" stroke-width="1.6"/></svg>
<svg class="a" style="left:170px;top:166px" width="19" height="19" viewBox="0 0 19 19"><circle cx="9.5" cy="9.5" r="8.5" fill="#cfc23a"/><path d="M1 9.5 A8.5 8.5 0 0 1 9.5 1 L9.5 9.5 Z" fill="#3a8fd0"/><path d="M9.5 1 A8.5 8.5 0 0 1 18 9.5 L9.5 9.5 Z" fill="#d42a2a"/><path d="M1 9.5 H18 A8.5 8.5 0 0 1 1 9.5" fill="#a8c040"/><ellipse cx="13" cy="6" rx="2" ry="3.5" fill="#222" transform="rotate(-30 13 6)"/></svg>
<svg class="a" style="left:211px;top:169px" width="8" height="12" viewBox="0 0 8 12"><path d="M1.5 1 L6.5 6 L1.5 11" fill="none" stroke="#2a2a2a" stroke-width="1.6"/></svg>
<!-- filter box -->
<div class="a" style="left:3px;top:189px;width:219px;height:26px;background:#f9f8fa;border:1px solid #cfcdd1"></div>
<svg class="a" style="left:5px;top:192px" width="18" height="21" viewBox="0 0 18 21"><path d="M1 2 H17 L10.5 10 V20 L7.5 18 V10 Z" fill="#f6f6f6" stroke="#3a3a3a" stroke-width="1"/><path d="M1 1.5 H17 V4 H1 Z" fill="#5aaad8" stroke="#2d5a78" stroke-width="0.8"/></svg>
<!-- tree -->
<svg class="a" style="left:0px;top:214px" width="24" height="24" viewBox="0 0 24 24"><path d="M3.2 8.4 L6.4 7.3 V4.8 L11.3 3.3 L15.6 5 V10.2 L19.6 11.6 V18 L14.5 20.4 L3.2 12.6 Z" fill="#efd54e" stroke="#2a2208" stroke-width="1.1" stroke-linejoin="round"/><path d="M10.6 6.3 V11.2 L14.9 13 V20.2 M14.9 13 L19.5 11.6 M6.4 7.3 L10.6 8.8" fill="none" stroke="#6a5a18" stroke-width="0.8"/></svg>
<div class="a" style="left:0;top:215px;width:225px;height:340px;overflow:hidden"><div class="t" style="left:25px;top:6px;font-size:12px;letter-spacing:0">Profilhalter (Standard) &lt;&lt;Standard&gt;_Anzeigestatus 1&gt;</div></div>
<svg class="a" style="left:8px;top:245px" width="5" height="7"><path d="M0 0 L4.5 3.5 L0 7 Z" fill="#5a5a5e"/></svg>
<svg class="a" style="left:24px;top:238px" width="20" height="20" viewBox="0 0 20 20"><path d="M1.5 16.5 V3 Q1.5 1.5 3 1.5 H7 L8.5 3.5 H16.5 Q18 3.5 18 5 V16.5 Q18 18 16.5 18 H3 Q1.5 18 1.5 16.5 Z" fill="#f6f6f7" stroke="#2a2a2a" stroke-width="1.05"/><path d="M2 4.2 H17.5 V6.5 H2 Z" fill="#d4d4d6"/><path d="M1.5 6.5 H18" stroke="#8a8a8c" stroke-width="0.6"/><circle cx="11" cy="11.5" r="4.3" fill="#fff" stroke="#2a2a2a" stroke-width="1"/><path d="M11 9 V11.5 L13.5 13" stroke="#2a2a2a" stroke-width="0.9" fill="none"/><path d="M4.5 13.5 Q5 9 8.5 8" stroke="#4a8ec0" stroke-width="1.8" fill="none"/><path d="M3 12 L5 15.5 L7 12 Z" fill="#4a8ec0"/></svg>
<div class="t" style="left:48px;top:243.0px;font-size:12px;letter-spacing:0">Historie</div>
<svg class="a" style="left:24px;top:260px" width="20" height="20" viewBox="0 0 20 20"><path d="M1.5 16.5 V3 Q1.5 1.5 3 1.5 H7 L8.5 3.5 H16.5 Q18 3.5 18 5 V16.5 Q18 18 16.5 18 H3 Q1.5 18 1.5 16.5 Z" fill="#f6f6f7" stroke="#2a2a2a" stroke-width="1.05"/><path d="M2 4.2 H17.5 V6.5 H2 Z" fill="#d4d4d6"/><path d="M1.5 6.5 H18" stroke="#8a8a8c" stroke-width="0.6"/><circle cx="10" cy="12" r="4.6" fill="#fff" stroke="#2a2a2a" stroke-width="1.1"/><path d="M8 14 L12.5 9.5" stroke="#4a8ec0" stroke-width="1.2"/><path d="M12 15.5 L14.8 12.5 L14 16 Z" fill="#d42020"/></svg>
<div class="t" style="left:48px;top:265.0px;font-size:12px;letter-spacing:0">Sensoren</div>
<svg class="a" style="left:8px;top:289px" width="5" height="7"><path d="M0 0 L4.5 3.5 L0 7 Z" fill="#5a5a5e"/></svg>
<svg class="a" style="left:24px;top:282px" width="20" height="20" viewBox="0 0 20 20"><path d="M1.5 16.5 V3 Q1.5 1.5 3 1.5 H7 L8.5 3.5 H16.5 Q18 3.5 18 5 V16.5 Q18 18 16.5 18 H3 Q1.5 18 1.5 16.5 Z" fill="#f6f6f7" stroke="#2a2a2a" stroke-width="1.05"/><path d="M2 4.2 H17.5 V6.5 H2 Z" fill="#d4d4d6"/><path d="M1.5 6.5 H18" stroke="#8a8a8c" stroke-width="0.6"/><path d="M5 16.5 L9.7 7 L14.5 16.5 M7 13 H12.5" stroke="#4a8ec0" stroke-width="1.8" fill="none"/><path d="M3.8 16.5 H7 M12.5 16.5 H15.5" stroke="#4a8ec0" stroke-width="1"/></svg>
<div class="t" style="left:48px;top:287.0px;font-size:12px;letter-spacing:0">Beschriftungen</div>
<svg class="a" style="left:8px;top:311px" width="5" height="7"><path d="M0 0 L4.5 3.5 L0 7 Z" fill="#5a5a5e"/></svg>
<svg class="a" style="left:24px;top:304px" width="20" height="20" viewBox="0 0 20 20"><path d="M1.5 16.5 V3 Q1.5 1.5 3 1.5 H7 L8.5 3.5 H16.5 Q18 3.5 18 5 V16.5 Q18 18 16.5 18 H3 Q1.5 18 1.5 16.5 Z" fill="#f6f6f7" stroke="#2a2a2a" stroke-width="1.05"/><path d="M2 4.2 H17.5 V6.5 H2 Z" fill="#d4d4d6"/><path d="M1.5 6.5 H18" stroke="#8a8a8c" stroke-width="0.6"/><path d="M6.5 9.5 L10 8 L13.5 9.5 V14 L10 16 L6.5 14 Z" fill="#5aaad8" stroke="#1d3a4a" stroke-width="0.9"/><path d="M6.5 9.5 L10 11 L13.5 9.5 M10 11 V16" stroke="#1d3a4a" stroke-width="0.7" fill="none"/></svg>
<div class="t" style="left:48px;top:309.0px;font-size:12px;letter-spacing:0">Volumenkörper(4)</div>
<svg class="a" style="left:24px;top:327px" width="20" height="18" viewBox="0 0 20 18"><circle cx="3" cy="2.5" r="2" fill="#fff" stroke="#333" stroke-width="0.8"/><circle cx="3" cy="8.5" r="2" fill="#6cb4e0" stroke="#333" stroke-width="0.8"/><circle cx="3" cy="14.5" r="2" fill="#e8c840" stroke="#333" stroke-width="0.8"/><path d="M6 2.5 H18 M6 8.5 H18 M6 14.5 H12" stroke="#222" stroke-width="1.4"/><circle cx="15.5" cy="15" r="2.5" fill="#222"/></svg>
<div class="t" style="left:48px;top:331.0px;font-size:12px;letter-spacing:0">Material &lt;nicht festgelegt&gt;</div>
<svg class="a" style="left:27px;top:349px" width="15" height="18" viewBox="0 0 15 18"><path d="M1.5 4.5 L13 2 V13.5 L1.5 16 Z" fill="none" stroke="#3a3a3a" stroke-width="0.9"/><path d="M7 0.5 V17.5" stroke="#3a3a3a" stroke-width="0.9" stroke-dasharray="2 1.5"/></svg>
<div class="t" style="left:48px;top:353.0px;font-size:12px;letter-spacing:0">Ebene vorne</div>
<svg class="a" style="left:27px;top:371px" width="15" height="18" viewBox="0 0 15 18"><path d="M1.5 4.5 L13 2 V13.5 L1.5 16 Z" fill="none" stroke="#3a3a3a" stroke-width="0.9"/><path d="M7 0.5 V17.5" stroke="#3a3a3a" stroke-width="0.9" stroke-dasharray="2 1.5"/></svg>
<div class="t" style="left:48px;top:375.0px;font-size:12px;letter-spacing:0">Ebene oben</div>
<svg class="a" style="left:27px;top:393px" width="15" height="18" viewBox="0 0 15 18"><path d="M1.5 4.5 L13 2 V13.5 L1.5 16 Z" fill="none" stroke="#3a3a3a" stroke-width="0.9"/><path d="M7 0.5 V17.5" stroke="#3a3a3a" stroke-width="0.9" stroke-dasharray="2 1.5"/></svg>
<div class="t" style="left:48px;top:397.0px;font-size:12px;letter-spacing:0">Ebene rechts</div>
<svg class="a" style="left:25px;top:415px" width="19" height="18" viewBox="0 0 19 18"><path d="M2.5 3 V15.5 H16" fill="none" stroke="#1a1a1a" stroke-width="1.8"/><path d="M0 4 L2.5 0 L5 4 Z M15 13 L19 15.5 L15 18 Z" fill="#1a1a1a"/></svg>
<div class="t" style="left:48px;top:419.0px;font-size:12px;letter-spacing:0">Ursprung</div>
<svg class="a" style="left:24px;top:437px" width="19" height="18" viewBox="0 0 19 18"><path d="M1 2.5 L3 1 H18 V15 L16 17 H1 Z" fill="#4a8ec0" stroke="#1d3a4a" stroke-width="1"/><rect x="3" y="3" width="13" height="13" fill="#6cb4e0" stroke="#1d3a4a" stroke-width="0.8"/><circle cx="9.5" cy="9.5" r="3.8" fill="#4a8ec0" stroke="#1d3a4a" stroke-width="0.9"/></svg>
<div class="t" style="left:48px;top:441.0px;font-size:12px;letter-spacing:0">Importiert1</div>
<svg class="a" style="left:24px;top:459px" width="19" height="18" viewBox="0 0 19 18"><path d="M2 11 Q2 7 9 6.5 Q16 7 17 11 V15 Q9 18 2 15 Z" fill="#f2f2f2" stroke="#333" stroke-width="1"/><path d="M1 5 Q8 -1 17 4 L12 7.5 Q7 4 3 8 Z" fill="#5da5d0" stroke="#2d5a78" stroke-width="0.8"/></svg>
<div class="t" style="left:48px;top:463.0px;font-size:12px;letter-spacing:0">Oberfläche-Offset1</div>
<svg class="a" style="left:24px;top:481px" width="19" height="18" viewBox="0 0 19 18"><path d="M1 8 Q5 3 9 4 L12 1 L17 5 L14 9 L11 15 Q6 14 1 8 Z" fill="#f0f0f0" stroke="#333" stroke-width="1"/><circle cx="9" cy="8" r="2.2" fill="#fff" stroke="#333" stroke-width="0.8"/><path d="M10 11 L15 16 M15 11 L10 16" stroke="#111" stroke-width="1.8"/></svg>
<div class="t" style="left:48px;top:485.0px;font-size:12px;letter-spacing:0">Bohrung löschen1</div>
<svg class="a" style="left:24px;top:503px" width="19" height="18" viewBox="0 0 19 18"><path d="M1 8 L7 6 V13 L1 17 Z M7 9 L17 7 V14 L7 13 Z" fill="#4a8ec0" stroke="#1d3a4a" stroke-width="0.8"/><path d="M5 3 L10 1 L15 3 V10 L10 12 L5 10 Z" fill="#f4f4f4" stroke="#333" stroke-width="0.9"/><path d="M5 3 L10 5 L15 3 M10 5 V12" fill="none" stroke="#333" stroke-width="0.8"/></svg>
<div class="t" style="left:48px;top:507.0px;font-size:12px;letter-spacing:0">Schneiden1</div>
<svg class="a" style="left:24px;top:525px" width="19" height="18" viewBox="0 0 19 18"><path d="M1 4 L5 1 V14 L1 17 Z" fill="#f0f0f0" stroke="#333" stroke-width="0.9"/><path d="M5 1 L9 2 V15 L5 14 Z" fill="#ddd" stroke="#333" stroke-width="0.8"/><path d="M9 3 L13 1 L17 2 V14 L13 17 L9 15 Z" fill="#4a8ec0" stroke="#1d3a4a" stroke-width="0.9"/><rect x="11" y="6" width="4" height="7" fill="#6cb4e0" stroke="#1d3a4a" stroke-width="0.7"/></svg>
<div class="t" style="left:48px;top:529.0px;font-size:12px;letter-spacing:0">Körper speichern1</div>
<div class="a" style="left:0;top:545px;width:225px;height:2px;background:#4a8cc4"></div>
<div class="a" style="left:227px;top:562px;width:9px;height:39px;background:#f7f5f8;border:1px solid #8e8e8e;border-left:none"></div>
<div class="a" style="left:227px;top:577px;width:7px;height:7px;border-radius:50%;background:#d8d8da;border:1px solid #9a9a9c"></div>

</body></html>
